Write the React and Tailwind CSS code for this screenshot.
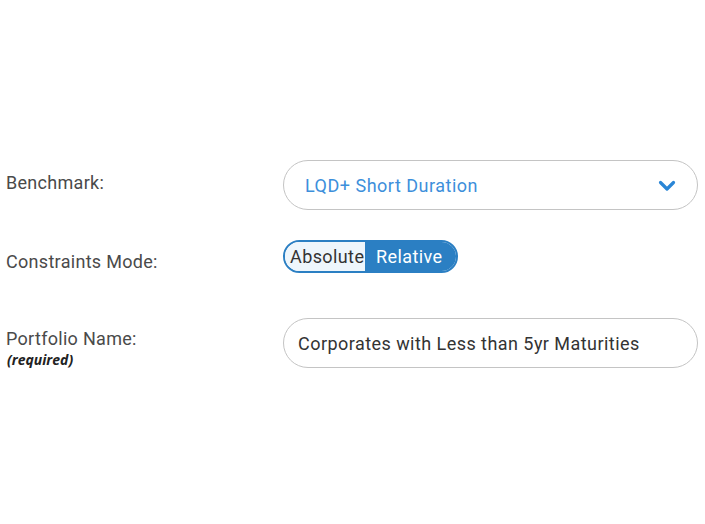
import React, { useState } from "react";

export default function App() {
  const [mode, setMode] = useState("Relative");
  const [name, setName] = useState("Corporates with Less than 5yr Maturities");

  return (
    <div className="w-[705px] h-[524px] bg-white text-[#4a4a4a] font-['Roboto',sans-serif] pt-[160px] pl-[6px]">
      <div className="flex items-center h-[50px]">
        <label className="w-[277px] text-[18px] tracking-[0.3px] leading-[20px] -mt-[4px]">Benchmark:</label>
        <div className="w-[415px] h-[50px] rounded-full border border-[#c4c4c4] flex items-center justify-between pl-[21px] pr-[21px]">
          <span className="text-[18px] tracking-[0.5px] text-[#3d8fdb]">LQD+ Short Duration</span>
          <svg width="18" height="12" viewBox="0 0 18 12" className="mt-[2px]">
            <path d="M2.5 2.5 L9 9 L15.5 2.5" fill="none" stroke="#2a86d6" strokeWidth="3.2" strokeLinecap="round" strokeLinejoin="round" />
          </svg>
        </div>
      </div>

      <div className="flex items-start mt-[30px]">
        <label className="w-[277px] text-[18px] tracking-[0.3px] leading-[20px] mt-[12px]">Constraints Mode:</label>
        <div className="flex h-[33px] rounded-full border-2 border-[#2b7fc3] overflow-hidden">
          {["Absolute", "Relative"].map((m) => (
            <button
              key={m}
              onClick={() => setMode(m)}
              className={`h-full text-[18px] tracking-[0.4px] leading-none ${
                m === "Absolute" ? "w-[80px] pl-[5px] text-left" : "w-[91px] pl-[11px] text-left"
              } ${mode === m ? "bg-[#2b7fc3] text-white" : "bg-[#eef6fc] text-[#333]"}`}
            >
              {m}
            </button>
          ))}
        </div>
      </div>

      <div className="flex items-start mt-[45px]">
        <div className="w-[277px] mt-[11px]">
          <div className="text-[18px] tracking-[0.3px] leading-[20px]">Portfolio Name:</div>
          <div className="text-[14px] leading-[16px] italic font-bold text-[#222] font-['Open_Sans',sans-serif] mt-[3px] ml-[1px]">(required)</div>
        </div>
        <input
          value={name}
          onChange={(e) => setName(e.target.value)}
          className="w-[415px] h-[50px] rounded-full border border-[#c4c4c4] pl-[14px] pr-[14px] text-[18px] tracking-[0.45px] text-[#333] outline-none"
        />
      </div>
    </div>
  );
}
